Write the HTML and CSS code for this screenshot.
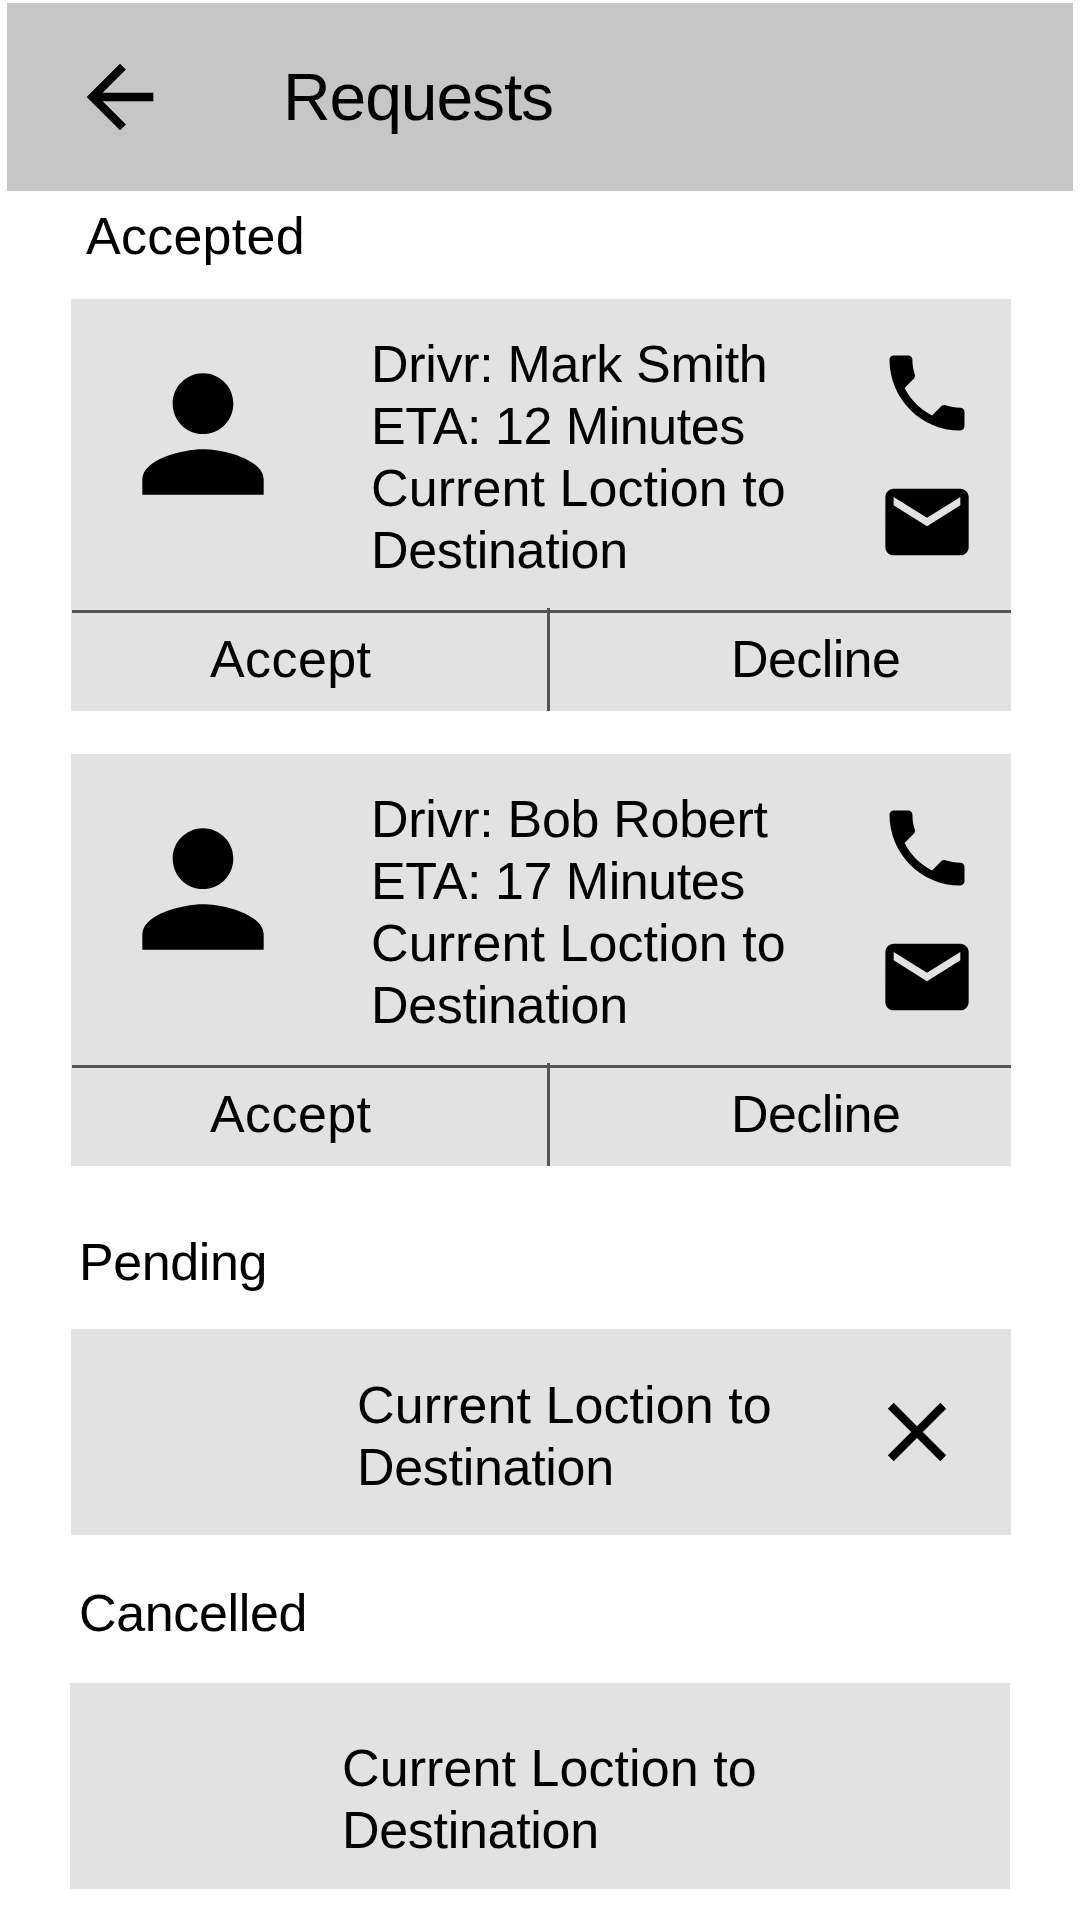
FILE: index.html
```html
<!DOCTYPE html>
<html lang="en">
<head>
  <meta charset="utf-8">
  <title>Requests</title>
  <link rel="stylesheet" href="styles.css">
</head>
<body>
  <svg class="sprite" aria-hidden="true">
    <symbol id="person" viewBox="0 0 24 24"><path d="M12 12c2.21 0 4-1.79 4-4s-1.79-4-4-4-4 1.79-4 4 1.79 4 4 4zm0 2c-2.67 0-8 1.34-8 4v2h16v-2c0-2.66-5.33-4-8-4z"/></symbol>
    <symbol id="phone" viewBox="0 0 24 24"><path d="M6.62 10.79c1.44 2.83 3.76 5.14 6.59 6.59l2.2-2.2c.27-.27.67-.36 1.02-.24 1.12.37 2.33.57 3.57.57.55 0 1 .45 1 1V20c0 .55-.45 1-1 1-9.39 0-17-7.61-17-17 0-.55.45-1 1-1h3.5c.55 0 1 .45 1 1 0 1.25.2 2.45.57 3.57.11.35.03.74-.25 1.02l-2.2 2.2z"/></symbol>
    <symbol id="mail" viewBox="0 0 24 24"><path d="M20 4H4c-1.1 0-1.99.9-1.99 2L2 18c0 1.1.9 2 2 2h16c1.1 0 2-.9 2-2V6c0-1.100-.9-2-2-2zm0 4l-8 5-8-5V6l8 5 8-5v2z"/></symbol>
  </svg>

  <header class="app-bar">
    <svg class="icon back" viewBox="0 0 24 24"><path d="M20 11H7.830l5.590-5.590L12 4l-8 8 8 8 1.410-1.410L7.830 13H20v-2z"/></svg>
    <h1 class="title">Requests</h1>
  </header>

  <main class="content">
    <h2 class="section-title accepted">Accepted</h2>

    <article class="card request">
      <div class="details">
        <svg class="avatar"><use href="#person"/></svg>
        <div class="info">
          <p class="name">Drivr: Mark Smith</p>
          <p class="eta">ETA: 12 Minutes</p>
          <p class="from">Current Loction to</p>
          <p class="to">Destination</p>
        </div>
        <div class="contact">
          <svg class="icon"><use href="#phone"/></svg>
          <svg class="icon"><use href="#mail"/></svg>
        </div>
      </div>
      <div class="actions">
        <div class="action accept">Accept</div>
        <div class="divider"></div>
        <div class="action decline">Decline</div>
      </div>
    </article>

    <article class="card request">
      <div class="details">
        <svg class="avatar"><use href="#person"/></svg>
        <div class="info">
          <p class="name">Drivr: Bob Robert</p>
          <p class="eta">ETA: 17 Minutes</p>
          <p class="from">Current Loction to</p>
          <p class="to">Destination</p>
        </div>
        <div class="contact">
          <svg class="icon"><use href="#phone"/></svg>
          <svg class="icon"><use href="#mail"/></svg>
        </div>
      </div>
      <div class="actions">
        <div class="action accept">Accept</div>
        <div class="divider"></div>
        <div class="action decline">Decline</div>
      </div>
    </article>

    <h2 class="section-title pending">Pending</h2>
    <article class="card trip pending-trip">
      <div class="route">
        <p class="from">Current Loction to</p>
        <p class="to">Destination</p>
      </div>
      <svg class="icon close" viewBox="0 0 24 24"><path d="M19 6.410L17.590 5 12 10.590 6.410 5 5 6.410 10.590 12 5 17.590 6.410 19 12 13.410 17.590 19 19 17.590 13.410 12z"/></svg>
    </article>

    <h2 class="section-title cancelled">Cancelled</h2>
    <article class="card trip cancelled-trip">
      <div class="route">
        <p class="from">Current Loction to</p>
        <p class="to">Destination</p>
      </div>
    </article>
  </main>
</body>
</html>
```
FILE: styles.css
```css
* {
  box-sizing: border-box;
  margin: 0;
  padding: 0;
}

body {
  width: 1080px;
  height: 1920px;
  overflow: hidden;
  padding-top: 3px;
  background: #fff;
  color: #000;
  font-family: "Liberation Sans", Arial, sans-serif;
  font-size: 52px;
  line-height: 62px;
}

.sprite {
  display: none;
}

.icon {
  display: block;
  flex: none;
  width: 100px;
  height: 100px;
}

.app-bar {
  display: flex;
  align-items: flex-start;
  height: 188px;
  margin: 0 7px;
  padding: 44px 0 0 63px;
  background: #c6c6c6;
}

.title {
  margin: 13px 0 0 113px;
  font-size: 66px;
  font-weight: 400;
  line-height: 74px;
  letter-spacing: -1.1px;
}

.content {
  padding: 0 69px 0 71px;
}

.section-title {
  font-size: 52px;
  font-weight: 400;
}

.accepted {
  padding: 14px 0 32px 15px;
  letter-spacing: 0.25px;
}

.pending {
  padding: 22px 0 36px 8px;
  letter-spacing: -0.4px;
}

.cancelled {
  padding: 47px 0 39px 8px;
  letter-spacing: -0.35px;
}

.card {
  background: #e2e2e2;
}

.request {
  height: 412px;
  margin-bottom: 43px;
}

.details {
  display: flex;
  align-items: flex-start;
  height: 311px;
}

.avatar {
  flex: none;
  width: 182px;
  height: 182px;
  margin: 43.500px 0 0 41px;
}

.info {
  width: 583px;
  padding: 34px 0 0 77px;
  white-space: nowrap;
}

.name {
  letter-spacing: -0.3px;
}

.eta {
  letter-spacing: -0.45px;
}

.from {
  letter-spacing: 0.08px;
}

.to {
  letter-spacing: -0.3px;
}

.contact {
  display: flex;
  flex-direction: column;
  gap: 29px;
  padding-top: 43.500px;
}

.actions {
  display: flex;
  height: 101px;
  margin-left: 1px;
  border-top: 3px solid #555;
}

.action {
  padding-top: 15px;
}

.accept {
  width: 475px;
  padding-left: 138px;
  letter-spacing: 0.4px;
}

.decline {
  padding-left: 181px;
  letter-spacing: -0.6px;
}

.divider {
  width: 3px;
  margin-top: -5px;
  background: #555;
}

.trip {
  display: flex;
  align-items: flex-start;
  height: 206px;
}

.route {
  width: 510px;
  white-space: nowrap;
}

.pending-trip {
  padding: 45px 0 0 286px;
}

.close {
  margin-top: 8px;
}

.cancelled-trip {
  margin: 0 1px 0 -1px;
  padding: 54px 0 0 272px;
}
```
